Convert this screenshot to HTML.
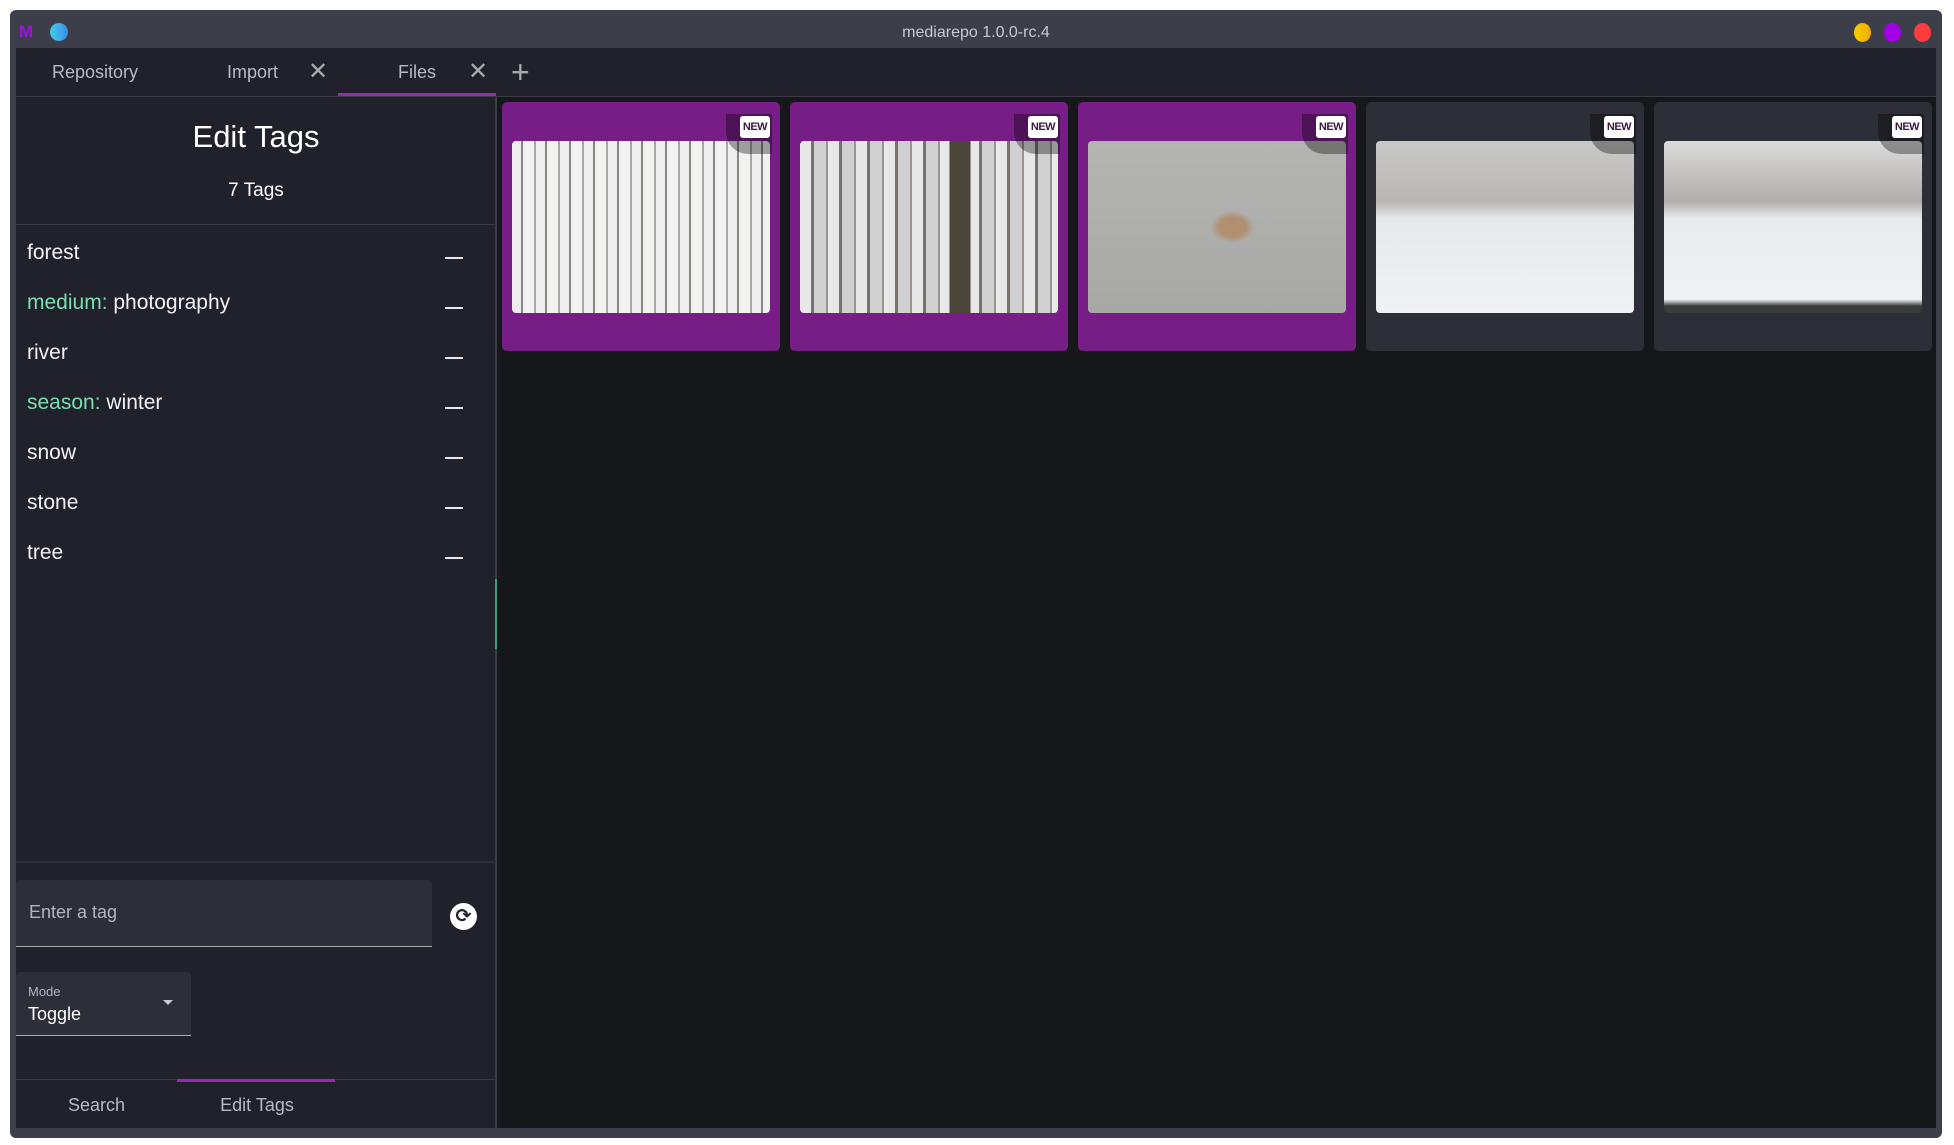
<!DOCTYPE html>
<html><head><meta charset="utf-8"><style>
*{box-sizing:border-box;margin:0;padding:0}
body{width:1954px;height:1145px;background:#fff;position:relative;overflow:hidden;font-family:"Liberation Sans","DejaVu Sans",sans-serif;color:#e8e8ee}
.win{position:absolute;left:10px;top:10px;width:1932px;height:1128px;background:#3c3e4a;border-radius:6px;overflow:hidden}
.title{position:absolute;left:0;top:2px;width:100%;text-align:center;line-height:42px;font-size:16px;color:#c8c9d0}
.abs{position:absolute}
.tabs{left:6px;top:38px;width:1920px;height:49px;background:#20212a;border-bottom:1px solid #3a3b44}
.tab{position:absolute;top:0;height:48px;line-height:48px;font-size:18px;color:#b8bac4}
.left{left:6px;top:87px;width:480px;height:1031px;background:#20212a;border-right:1px solid #3a3b44}
.main{left:487px;top:87px;width:1439px;height:1031px;background:#16171b}
.tag{position:absolute;left:11px;font-size:21px;color:#f2f2f6}
.ns{color:#79e0ae}
.minus{position:absolute;left:429px;width:18px;height:2px;background:#e8e8ee}
.card{position:absolute;top:5px;width:278px;height:249px;border-radius:5px;background:#2c2e38}
.card.sel{background:#771e86}
.img{position:absolute;left:10px;top:39px;width:258px;height:172px;border-radius:4px;overflow:hidden}
.new{position:absolute;right:10px;top:14px;width:30px;height:22px;background:#fff;border-radius:3px;color:#3a1a40;font-size:11px;font-weight:bold;text-align:center;line-height:22px;letter-spacing:-0.5px}
.bub{position:absolute;right:8px;top:12px;width:46px;height:40px;background:rgba(0,0,0,.35);border-radius:0 0 0 22px}
</style></head><body>
<div class="win">
 <div class="title">mediarepo 1.0.0-rc.4</div>
 <div class="abs" style="left:9px;top:14px;color:#a012e0;font-weight:bold;font-size:17px;line-height:16px">M</div>
 <div class="abs" style="left:40px;top:13px;width:18px;height:18px;border-radius:50%;background:linear-gradient(90deg,#3ed0e8,#3a8be8)"></div>
 <div class="abs" style="left:1844px;top:13px;width:17px;height:19px;border-radius:50%;background:linear-gradient(90deg,#f5d000,#f0a800)"></div>
 <div class="abs" style="left:1874px;top:13px;width:17px;height:19px;border-radius:50%;background:#a400e8"></div>
 <div class="abs" style="left:1904px;top:13px;width:17px;height:19px;border-radius:50%;background:#ff3c3c"></div>
 <div class="abs tabs">
  <div class="tab" style="left:36px">Repository</div>
  <div class="tab" style="left:211px">Import</div>
  <div class="tab" style="left:292px;font-size:24px;color:#aaa">✕</div>
  <div class="tab" style="left:382px">Files</div>
  <div class="tab" style="left:452px;font-size:24px;color:#aaa">✕</div>
  <div class="tab" style="left:495px;font-size:32px;color:#aaa;font-weight:300">+</div>
  <div class="abs" style="left:322px;top:45px;width:158px;height:3px;background:#9a2aaf"></div>
 </div>
 <div class="abs left">
  <div class="abs" style="left:0;top:22px;width:480px;text-align:center;font-size:31px;color:#fff">Edit Tags</div>
  <div class="abs" style="left:0;top:83px;width:480px;text-align:center;font-size:19px;color:#fff">7 Tags</div>
  <div class="abs" style="left:0;top:127px;width:480px;height:1px;background:#3a3b44"></div>
  <div class="tag" style="top:144px">forest</div><div class="minus" style="top:160px"></div>
  <div class="tag" style="top:194px"><span class="ns">medium:</span> photography</div><div class="minus" style="top:210px"></div>
  <div class="tag" style="top:244px">river</div><div class="minus" style="top:260px"></div>
  <div class="tag" style="top:294px"><span class="ns">season:</span> winter</div><div class="minus" style="top:310px"></div>
  <div class="tag" style="top:344px">snow</div><div class="minus" style="top:360px"></div>
  <div class="tag" style="top:394px">stone</div><div class="minus" style="top:410px"></div>
  <div class="tag" style="top:444px">tree</div><div class="minus" style="top:460px"></div>
  <div class="abs" style="left:479px;top:482px;width:2px;height:70px;background:#3e9a78"></div>
  <div class="abs" style="left:0;top:764px;width:480px;height:2px;background:#2c2d36"></div>
  <div class="abs" style="left:0;top:783px;width:416px;height:67px;background:#2c2e38;border-radius:4px 4px 0 0;border-bottom:1px solid #aaa"></div>
  <div class="abs" style="left:13px;top:805px;font-size:18px;color:#b4b6c0">Enter a tag</div>
  <div class="abs" style="left:434px;top:806px;width:27px;height:27px;border-radius:50%;background:#fff;color:#20212a;font-size:19px;text-align:center;line-height:27px;font-weight:bold">⟳</div>
  <div class="abs" style="left:0;top:875px;width:175px;height:64px;background:#2c2e38;border-radius:4px 4px 0 0;border-bottom:1px solid #aaa"></div>
  <div class="abs" style="left:12px;top:887px;font-size:13px;color:#b4b6c0">Mode</div>
  <div class="abs" style="left:12px;top:907px;font-size:18px;color:#fff">Toggle</div>
  <div class="abs" style="left:147px;top:903px;border-left:5px solid transparent;border-right:5px solid transparent;border-top:5px solid #ccc"></div>
  <div class="abs" style="left:0;top:982px;width:480px;height:1px;background:#3a3b44"></div>
  <div class="abs" style="left:161px;top:982px;width:158px;height:3px;background:#9a2aaf"></div>
  <div class="abs" style="left:52px;top:998px;font-size:18px;color:#b8bac4">Search</div>
  <div class="abs" style="left:161px;top:998px;width:160px;text-align:center;font-size:18px;color:#b8bac4">Edit Tags</div>
 </div>
 <div class="abs main">
  <div class="card sel" style="left:5px"><div class="img" style="background:repeating-linear-gradient(90deg,#eee 0 9px,#8a8784 9px 11px,#f2f2f2 11px 22px,#a9a6a2 22px 24px),#ccc"></div><div class="bub"></div><div class="new">NEW</div></div>
  <div class="card sel" style="left:293px"><div class="img" style="background:linear-gradient(90deg,transparent 0 58%,#4a4538 58% 66%,transparent 66%),repeating-linear-gradient(90deg,#e8e8e8 0 11px,#77736c 11px 14px,#d0d0d0 14px 26px,#9a968f 26px 28px)"></div><div class="bub"></div><div class="new">NEW</div></div>
  <div class="card sel" style="left:581px"><div class="img" style="background:radial-gradient(ellipse 22px 16px at 56% 50%,#b09070 60%,transparent 100%),linear-gradient(#b4b5b3,#a8a9a6)"></div><div class="bub"></div><div class="new">NEW</div></div>
  <div class="card" style="left:869px"><div class="img" style="background:linear-gradient(#c9c9c8 0,#b8b6b2 35%,#e6e8ec 45%,#f0f1f4 100%)"></div><div class="bub"></div><div class="new">NEW</div></div>
  <div class="card" style="left:1157px"><div class="img" style="background:linear-gradient(#dcdcdc 0,#b0aeab 35%,#e8eaee 45%,#f0f1f4 92%,#3a3c38 96%)"></div><div class="bub"></div><div class="new">NEW</div></div>
 </div>
</div>
</body></html>
